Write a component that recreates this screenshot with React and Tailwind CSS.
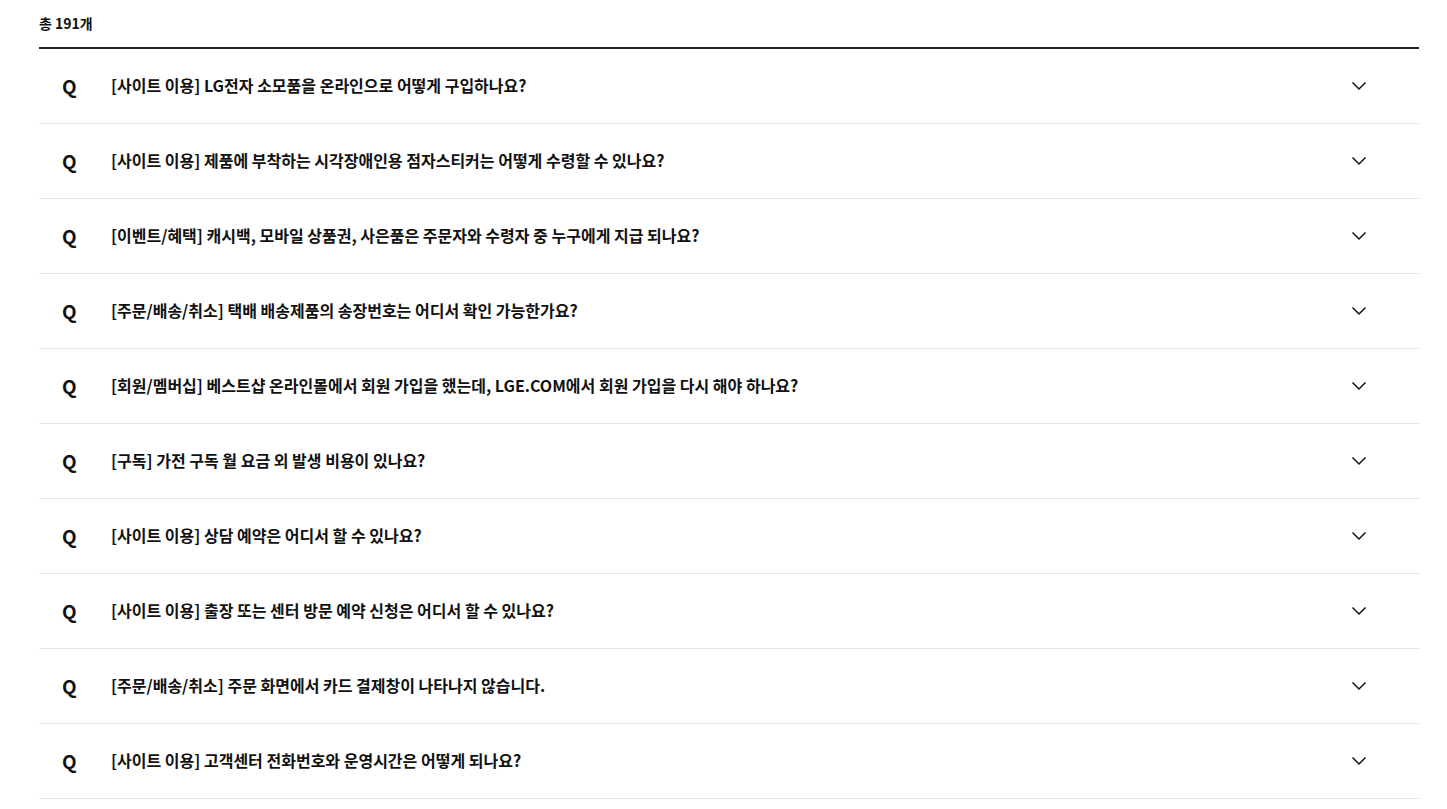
const faqs = [
  "[사이트 이용] LG전자 소모품을 온라인으로 어떻게 구입하나요?",
  "[사이트 이용] 제품에 부착하는 시각장애인용 점자스티커는 어떻게 수령할 수 있나요?",
  "[이벤트/혜택] 캐시백, 모바일 상품권, 사은품은 주문자와 수령자 중 누구에게 지급 되나요?",
  "[주문/배송/취소] 택배 배송제품의 송장번호는 어디서 확인 가능한가요?",
  "[회원/멤버십] 베스트샵 온라인몰에서 회원 가입을 했는데, LGE.COM에서 회원 가입을 다시 해야 하나요?",
  "[구독] 가전 구독 월 요금 외 발생 비용이 있나요?",
  "[사이트 이용] 상담 예약은 어디서 할 수 있나요?",
  "[사이트 이용] 출장 또는 센터 방문 예약 신청은 어디서 할 수 있나요?",
  "[주문/배송/취소] 주문 화면에서 카드 결제창이 나타나지 않습니다.",
  "[사이트 이용] 고객센터 전화번호와 운영시간은 어떻게 되나요?",
];

const Chevron = () => (
  <svg width="16" height="10" viewBox="0 0 16 10" fill="none">
    <path d="M1.5 1.5 L8 8 L14.5 1.5" stroke="#111" strokeWidth="1.5" />
  </svg>
);

export default function App() {
  return (
    <div
      className="bg-white min-h-screen px-[39px] pt-[14px] text-[#111]"
      style={{ fontFamily: '"Noto Sans CJK KR", "Noto Sans", sans-serif' }}
    >
      <div className="w-[1380px]">
        <p className="text-[14px] font-bold leading-[18px] pb-[15px]">총 191개</p>
        <ul className="border-t-2 border-[#222]">
          {faqs.map((q, i) => (
            <li
              key={i}
              className="flex items-center h-[75px] pb-[2px] border-b border-[#e4e4e4]"
            >
              <span className="w-[72px] pl-[23px] text-[19px] font-bold leading-none">Q</span>
              <span className="flex-1 text-[16px] font-bold">{q}</span>
              <span className="w-[68px] flex justify-start pt-[2px]">
                <Chevron />
              </span>
            </li>
          ))}
        </ul>
      </div>
    </div>
  );
}
